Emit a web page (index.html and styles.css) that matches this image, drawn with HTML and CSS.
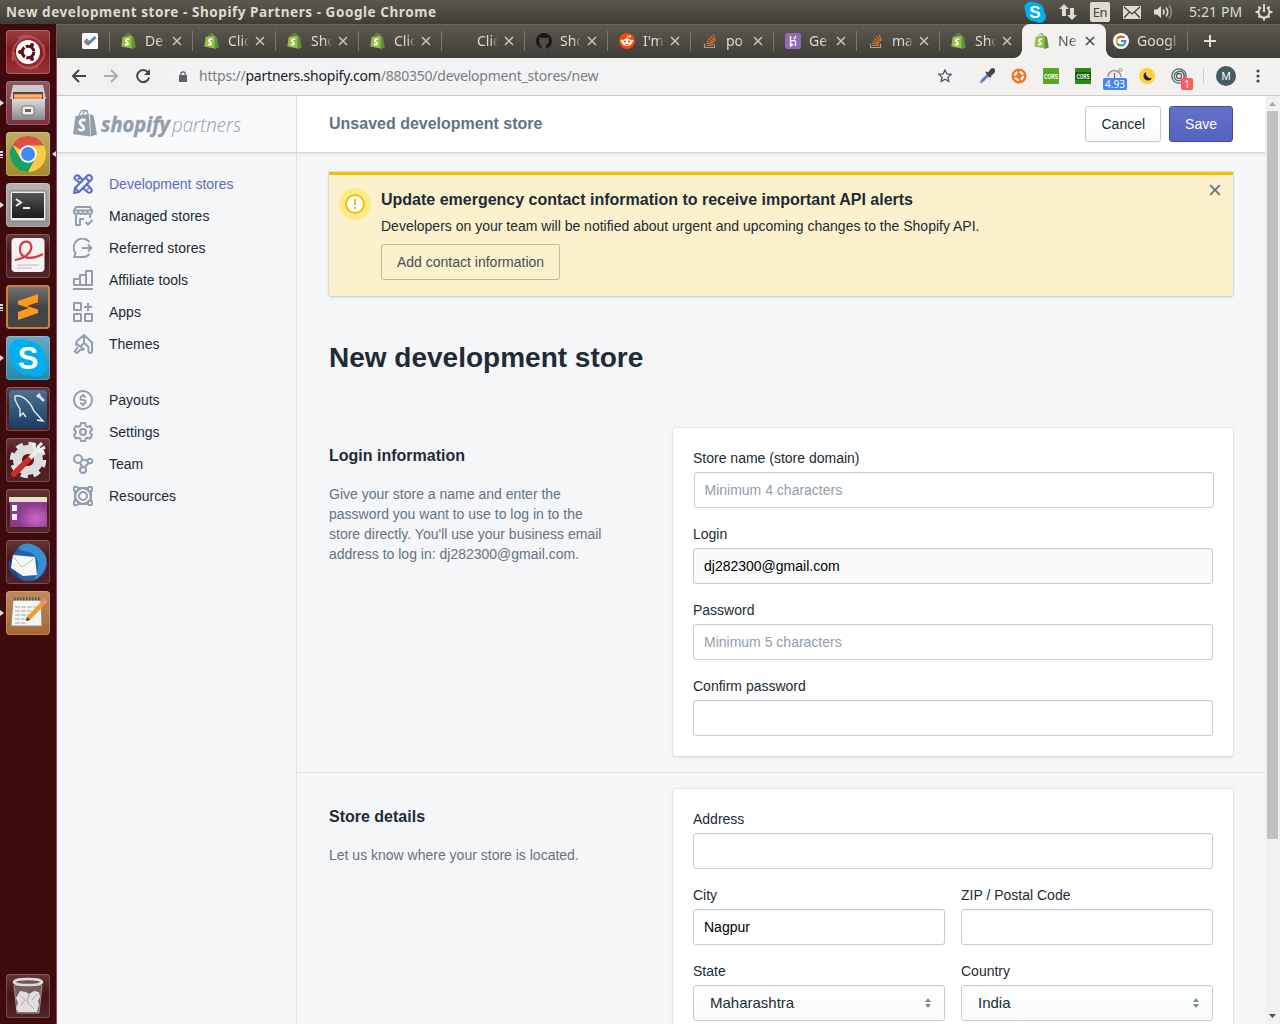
FILE: index.html
```html
<!DOCTYPE html>
<html lang="en">
<head>
<meta charset="utf-8">
<title>New development store - Shopify Partners</title>
<link rel="stylesheet" href="styles.css">
</head>
<body>
<svg class="defs" width="0" height="0" aria-hidden="true">
  <defs>
    <symbol id="bag" viewBox="0 0 16 16">
      <path d="M1.6 4 11 2.6l1 13.2L.4 13.6z" fill="#95bf47"/>
      <path d="M10.6 2.6 13 4.2l1.8 10.4-4.2 1.3z" fill="#5e8e3e"/>
      <path d="M4 4C4.6 1.6 6 .4 7.200.6 8.800.8 9 2.400 9 3.400M6.500 3.500C7 1.500 8.500.6 9.500 1.400" fill="none" stroke="#7dab3c" stroke-width=".9"/>
      <path d="M8.300 6.400C5.800 5.300 4.100 7 5.400 8.500c1 .9 2.200 1.500 1.600 2.700-.5.9-1.900.6-3-.2" fill="none" stroke="#fff" stroke-width="1.700"/>
    </symbol>
    <symbol id="stack" viewBox="0 0 16 16">
      <path d="M2.500 10.500v4h10v-4" fill="none" stroke="#9aa3a8" stroke-width="1.200"/>
      <path d="M4.200 12.500h6.800M4.200 10.400l6.800.9M4.700 8l6.500 2M5.900 5.400l5.800 3.700M8 3l4.500 5.200M11 1.500l2.400 6.200" stroke="#e8711c" stroke-width="1.100"/>
    </symbol>
    <symbol id="x" viewBox="0 0 10 10"><path d="M1 1l8 8M9 1l-8 8" stroke="currentColor" stroke-width="1.500"/></symbol>
    <symbol id="updown" viewBox="0 0 6 10"><path d="M0 4 3 0l3 4zM0 6h6l-3 4z" fill="#798c9c"/></symbol>
    <linearGradient id="steel" x2="0" y2="1"><stop stop-color="#ddd"/><stop offset="1" stop-color="#888"/></linearGradient>
    <linearGradient id="blk" x2="0" y2="1"><stop stop-color="#555"/><stop offset="1" stop-color="#1b1b1b"/></linearGradient>
    <linearGradient id="blue" x2="0" y2="1"><stop stop-color="#4d7192"/><stop offset="1" stop-color="#173e63"/></linearGradient>
    <radialGradient id="purp" cx=".7" cy=".7"><stop stop-color="#cf68c4"/><stop offset="1" stop-color="#8a3a90"/></radialGradient>
  </defs>
</svg>

<header class="panel">
  <span class="panel-title">New development store - Shopify Partners - Google Chrome</span>
  <div class="indicators">
    <svg width="22" height="22" viewBox="0 0 22 22"><circle cx="7" cy="7" r="6.500" fill="#00aff0"/><circle cx="15.500" cy="15.500" r="6.500" fill="#00aff0"/><circle cx="11" cy="11" r="9.500" fill="#00aff0"/><text x="11" y="17" class="skype-s" font-size="17">S</text></svg>
    <svg width="18" height="18" viewBox="0 0 18 18" fill="#dfdbd2"><path d="M5 1l5 5H7v7H3V6H0zM13 17l5-5h-3V5h-4v7H8z"/></svg>
    <span class="lang">En</span>
    <svg width="18" height="13" viewBox="0 0 18 13"><path d="M0 0h18v13H0z" fill="#dfdbd2"/><path d="M1 1l8 7 8-7M1 12l5.500-6M17 12l-5.500-6" stroke="#45433d" stroke-width="1.300" fill="none"/></svg>
    <svg width="20" height="16" viewBox="0 0 20 16" fill="none" stroke="#dfdbd2" stroke-width="1.600"><path d="M0 5.500h3L7 2v12l-4-3.500H0z" fill="#dfdbd2" stroke="none"/><path d="M9 5.500q2 2.500 0 5M12 3.500q3.500 4.500 0 9"/><path d="M15 1.500q5 6.500 0 13" stroke="#8d8a82"/></svg>
    <span class="clock">5:21 PM</span>
    <svg width="18" height="18" viewBox="0 0 18 18" fill="none" stroke="#dfdbd2"><path d="M6 4.500a5.500 5.500 0 1 0 6 0" stroke-width="2"/><path d="M9 1v8" stroke-width="2"/><path d="M3.500 3.500l2 2M14.500 3.500l-2 2M.5 9h3M17.500 9h-3M3.500 14.500l2-2M14.500 14.500l-2-2M9 17.500v-3" stroke-width="2"/></svg>
  </div>
</header>

<div class="desktop">
  <aside class="launcher">
    <div class="tile t-dash"><svg viewBox="0 0 44 44"><path d="M7 31C4 14 16 4 29 8M37 14c5 14-5 27-20 23M12 8C24 2 38 10 38 24M8 22c0 14 14 20 24 14" stroke="#c76c70" stroke-width="2" fill="none" opacity=".6"/><circle cx="22" cy="22" r="12" fill="#fff"/><circle cx="22" cy="22" r="5.800" fill="none" stroke="#5e1014" stroke-width="3" stroke-dasharray="10.600 1.550"/><circle cx="14" cy="22" r="2" fill="#5e1014"/><circle cx="26" cy="15" r="2" fill="#5e1014"/><circle cx="26" cy="29" r="2" fill="#5e1014"/></svg></div>
    <div class="tile t-files run"><svg viewBox="0 0 44 44"><path d="M7 4h30l3 14H4z" fill="#ccc"/><path d="M7 11h30v9H7z" fill="#514338"/><path d="M8 13h28v6H8z" fill="#ef944e"/><path d="M8 15h28" stroke="#ffd1a0"/><path d="M6 18h33v21H6z" fill="url(#steel)"/><rect x="16" y="25" width="12" height="9" rx="2" fill="#eee" stroke="#777"/><path d="M19 28h6v3h-6z" fill="#666"/></svg></div>
    <div class="tile t-chrome run multi focus"><svg viewBox="0 0 44 44"><circle cx="22" cy="22" r="18" fill="#fbcd43"/><path d="M22 22 6.400 13A18 18 0 0 1 37.600 13L38 13.500H22z" fill="#de5246"/><path d="M6.400 13A18 18 0 0 0 22 40l7.500-14L22 22l-7.500 4.500z" fill="#18a05f"/><circle cx="22" cy="22" r="8.700" fill="#fff"/><circle cx="22" cy="22" r="7" fill="#4587f3"/></svg></div>
    <div class="tile t-term run"><svg viewBox="0 0 44 44"><rect x="4" y="8" width="36" height="30" rx="1" fill="#eee" stroke="#777"/><path d="M6 10h32v25H6z" fill="url(#blk)"/><path d="M10 16l5 3.500-5 3.500M17 25h7" stroke="#eee" stroke-width="2" fill="none"/></svg></div>
    <div class="tile t-dark"><svg viewBox="0 0 44 44"><rect x="5.500" y="4" width="33" height="34" rx="4" fill="#f3f3f3"/><path d="M9 26c9-1 18-8 16-15-1-5-10-5-11 3-1 10 10 13 23 6" fill="none" stroke="#d43a40" stroke-width="2.200"/><path d="M11 31h22M11 34h15" stroke="#bbb"/></svg></div>
    <div class="tile t-subl run multi"><svg viewBox="0 0 44 44"><path d="M32 9v8l-11 4 11 3.500V28l-20 7v-8l11-4-11-3.500V16z" fill="#ff9820"/></svg></div>
    <div class="tile t-skype run"><svg viewBox="0 0 44 44"><circle cx="14" cy="14" r="11" fill="#00aff0"/><circle cx="30" cy="30" r="11" fill="#00aff0"/><circle cx="22" cy="22" r="17" fill="#00aff0"/><text x="22" y="33" class="skype-s" font-size="31">S</text></svg></div>
    <div class="tile t-dark"><svg viewBox="0 0 44 44"><rect x="3" y="3" width="38" height="38" rx="3" fill="url(#blue)"/><path d="M9 9c8-2 16 7 19 15l9 10-6-1M9 9c-1 5 3 9 5 13v7l3-3 3 4" fill="none" stroke="#e7edf2" stroke-width="1.400"/><path d="M32 8l6 6M31 10l3-3" stroke="#dde6ee" stroke-width="2.500"/></svg></div>
    <div class="tile t-dark"><svg viewBox="0 0 44 44"><circle cx="22" cy="22" r="16" fill="none" stroke="#e2e2e2" stroke-width="4.500" stroke-dasharray="7 5.570"/><circle cx="22" cy="22" r="10.500" fill="none" stroke="#dcdcdc" stroke-width="9"/><path d="M8 36 25 19" stroke="#c92c2a" stroke-width="6" stroke-linecap="round"/><path d="M24 20l7-7" stroke="#eee" stroke-width="4"/><path d="M29 5c-3 5 3 11 9 8M36 5l-4 4 2 3 5-3" stroke="#eee" stroke-width="3" fill="none"/></svg></div>
    <div class="tile t-dark"><svg viewBox="0 0 44 44"><path d="M4 9h37v29H4z" fill="url(#purp)"/><path d="M3 8h38v5H3z" fill="#e6e2c9"/><path d="M6 16h5v6H6zM6 25h5v6H6z" fill="#fff"/></svg></div>
    <div class="tile t-dark"><svg viewBox="0 0 44 44"><circle cx="23" cy="23" r="18" fill="#2462ac"/><path d="M12 8c6-8 20-5 27 7 4 7 0 20-11 25 6-11 6-20-1-26-5-4-10-1-15-6z" fill="#378fd0"/><path d="M3 20c-2 8 2 16 10 19L6 22z" fill="#19468c"/><path d="M7 15l22 2 2 18-14 1L5 28z" fill="#f7f7f7"/><path d="M7 16l9 11 13-9" fill="none" stroke="#bbb"/></svg></div>
    <div class="tile t-note run"><svg viewBox="0 0 44 44"><path d="M7 9h28l1 26H5z" fill="#f5f5f1" stroke="#888"/><path d="M8 8h27" stroke="#555" stroke-width="3" stroke-dasharray="1.500 1.500"/><path d="M9 16h22M9 20h20M9 24h16M9 28h13M9 32h12" stroke="#aaa" stroke-dasharray="5 1"/><path d="M22 28 38 11" stroke="#f39a35" stroke-width="4.500"/><path d="M37 12l3-3" stroke="#e88c91" stroke-width="5"/><path d="M20 30l1-4 3 3z" fill="#333"/></svg></div>
    <div class="tile t-dark trash"><svg viewBox="0 0 44 44"><path d="M8 11h28l-3 28H11z" fill="#795c5e" stroke="#aa9294"/><path d="M14 17l6 1 3 2 5-3 5 1 1 5-2 4 1 4-2 7H12l-2-4 2-5-2-5z" fill="#dfdfdf"/><path d="M14 21l5 5-4 5M23 20l-2 8 7 7M31 20l-5 6" stroke="#aaa" fill="none"/><ellipse cx="22" cy="8" rx="14" ry="3" fill="#6b5354" stroke="#ddd" stroke-width="2.500"/></svg></div>
  </aside>

  <div class="browser">
    <nav class="tabs">
      <div class="tab pinned"><svg class="fav" viewBox="0 0 16 16"><rect width="16" height="16" rx="1.500" fill="#fff"/><path d="M2.500 7.500 6 11.500" stroke="#e6644d" stroke-width="3"/><path d="M4 6l3 3" stroke="#62a55a" stroke-width="2"/><path d="M5.500 11.500 13.500 4" stroke="#5383cb" stroke-width="3"/></svg></div>
      <div class="tab"><svg class="fav"><use href="#bag"/></svg><span>De</span><svg class="close"><use href="#x"/></svg></div>
      <div class="tab"><svg class="fav"><use href="#bag"/></svg><span>Clic</span><svg class="close"><use href="#x"/></svg></div>
      <div class="tab"><svg class="fav"><use href="#bag"/></svg><span>Sho</span><svg class="close"><use href="#x"/></svg></div>
      <div class="tab"><svg class="fav"><use href="#bag"/></svg><span>Clic</span><svg class="close"><use href="#x"/></svg></div>
      <div class="tab"><svg class="fav"></svg><span>Clic</span><svg class="close"><use href="#x"/></svg></div>
      <div class="tab"><svg class="fav" viewBox="0 0 16 16"><circle cx="8" cy="8" r="8" fill="#191717"/><path d="M6 16v-4C3.500 11.500 3 9.500 3.300 7.500L3.500 4l2 1h5l2-1 .3 3.500C13 9.500 12.500 11.500 10 12v4" fill="#504e47"/><path d="M3 11.500q1 2.500 3 2" stroke="#504e47" fill="none"/></svg><span>Sho</span><svg class="close"><use href="#x"/></svg></div>
      <div class="tab"><svg class="fav" viewBox="0 0 16 16"><circle cx="8" cy="8" r="8" fill="#ff4500"/><ellipse cx="8" cy="9.300" rx="5" ry="3.700" fill="#fff"/><circle cx="2.900" cy="8" r="1.300" fill="#fff"/><circle cx="13.100" cy="8" r="1.300" fill="#fff"/><circle cx="11" cy="3.500" r="1.100" fill="#fff"/><path d="M8 6l.6-3 2.400.5" stroke="#fff" stroke-width=".8" fill="none"/><circle cx="6" cy="8.600" r="1.100" fill="#ff4500"/><circle cx="10" cy="8.600" r="1.100" fill="#ff4500"/><path d="M5.800 11q2.200 1.300 4.400 0" stroke="#ff4500" stroke-width=".8" fill="none"/></svg><span>I'm</span><svg class="close"><use href="#x"/></svg></div>
      <div class="tab"><svg class="fav"><use href="#stack"/></svg><span>po</span><svg class="close"><use href="#x"/></svg></div>
      <div class="tab"><svg class="fav" viewBox="0 0 16 16"><rect width="16" height="16" rx="2" fill="#9068b3"/><path d="M5.500 3v5.500Q10.500 6 10.500 9v4M5.500 10.500V13l2-1.300zM10.500 3q0 2-1.500 3" stroke="#fff" stroke-width="1.400" fill="none"/></svg><span>Ge</span><svg class="close"><use href="#x"/></svg></div>
      <div class="tab"><svg class="fav"><use href="#stack"/></svg><span>ma</span><svg class="close"><use href="#x"/></svg></div>
      <div class="tab no-sep"><svg class="fav"><use href="#bag"/></svg><span>Sho</span><svg class="close"><use href="#x"/></svg></div>
      <div class="tab active"><svg class="fav"><use href="#bag"/></svg><span>Ne</span><svg class="close"><use href="#x"/></svg></div>
      <div class="tab google"><svg class="fav" viewBox="0 0 16 16"><circle cx="8" cy="8" r="8" fill="#fff"/><g fill="none" stroke-width="2.200"><path d="M4.200 5.800A4.500 4.500 0 0 1 11.300 4.800" stroke="#ea4335"/><path d="M4.200 5.800a4.500 4.500 0 0 0 0 4.400" stroke="#fbbc05"/><path d="M4.200 10.200a4.500 4.500 0 0 0 7 1.100" stroke="#34a853"/><path d="M11.200 11.300A4.500 4.500 0 0 0 12.400 8H8" stroke="#4285f4"/></g></svg><span>Googl</span></div>
      <svg class="plus" viewBox="0 0 12 12"><path d="M6 0v12M0 6h12" stroke="#e2dfd7" stroke-width="2"/></svg>
    </nav>

    <div class="toolbar">
      <svg class="nav-ic" viewBox="0 0 14 14"><path d="M14 7H1.500M7 1 1 7l6 6" fill="none" stroke="#45454a" stroke-width="2"/></svg>
      <svg class="nav-ic" viewBox="0 0 14 14"><path d="M0 7h12.500M7 1l6 6-6 6" fill="none" stroke="#adacaa" stroke-width="2"/></svg>
      <svg class="nav-ic" viewBox="0 0 14 14"><path d="M11.800 3.200A6 6 0 1 0 13 8.500" fill="none" stroke="#45454a" stroke-width="2"/><path d="M14 0v6H8z" fill="#45454a"/></svg>
      <div class="omnibox">
        <svg width="8" height="11" viewBox="0 0 8 11"><path d="M0 4h8v7H0z" fill="#5f6368"/><path d="M1.800 4.500V3a2.200 2.200 0 0 1 4.400 0v1.500" fill="none" stroke="#5f6368" stroke-width="1.200"/></svg>
        <span class="url">https://<b>partners.shopify.com</b>/880350/development_stores/new</span>
        <svg class="star" viewBox="0 0 14 14"><path d="M7 1l1.800 4 4.300.4-3.300 2.800 1 4.300L7 10.200l-3.800 2.300 1-4.300L.9 5.400 5.200 5z" fill="none" stroke="#54585e" stroke-width="1.300"/></svg>
      </div>
      <div class="exts">
        <svg viewBox="0 0 16 16"><path d="M1 15l1-3 6-6 2 2-6 6z" fill="#507ee0" stroke="#aab"/><path d="M7 4l5 5M9 6l3-4q2-2 3 0 1 1-1 3l-4 3z" fill="#444" stroke="#444" stroke-width="1.800"/></svg>
        <svg viewBox="0 0 16 16"><circle cx="8" cy="8" r="7.500" fill="#f47521"/><circle cx="8" cy="8" r="4" fill="none" stroke="#fff" stroke-width="2.200" stroke-dasharray="4.300 2"/></svg>
        <svg viewBox="0 0 16 16"><rect width="16" height="16" rx="1" fill="#58a61f"/><text class="cors" x="1" y="11" textLength="14" lengthAdjust="spacingAndGlyphs">CORS</text></svg>
        <svg viewBox="0 0 16 16"><rect width="16" height="16" rx="1" fill="#2c8a10"/><path d="M0 4h16v8H0z" fill="#165f05"/><text class="cors" x="1.500" y="11" textLength="13" lengthAdjust="spacingAndGlyphs">CORS</text></svg>
        <span class="badged"><svg viewBox="0 0 16 16"><path d="M1 9a6.500 6.500 0 0 1 13 0" fill="#eee" stroke="#999" stroke-width="1.500"/><path d="M7.500 10V5" stroke="#c33"/><circle cx="13.500" cy="2" r="1.500" fill="none" stroke="#999"/></svg><i class="badge speed">4.93</i></span>
        <svg viewBox="0 0 16 16"><circle cx="8" cy="8" r="8" fill="#fcd535"/><path d="M7 4a4.500 4.500 0 1 0 6 6A5 5 0 0 1 7 4z" fill="#2c1a60"/></svg>
        <span class="badged"><svg viewBox="0 0 16 16"><g fill="none" stroke="#59616c" stroke-width="1.300"><circle cx="8" cy="8" r="7.200"/><circle cx="8" cy="8" r="2.500"/><path d="M4 11Q1.500 5 7.500 3.500T13 9M11.500 4Q16 9 10.500 12M3 9q2 5 7 3"/></g></svg><i class="badge red">1</i></span>
      </div>
      <span class="avatar">M</span>
      <svg class="dots" viewBox="0 0 4 14"><circle cx="2" cy="2" r="1.600"/><circle cx="2" cy="7" r="1.600"/><circle cx="2" cy="12" r="1.600"/></svg>
    </div>

    <div class="viewport">
      <aside class="sidebar">
        <div class="brand">
          <svg width="170" height="32" viewBox="0 0 170 32">
            <path d="M2.500 7 16 5l1.200 22.600L0 25z" fill="#919eab"/><path d="M17 4.800l3.500 2L24 25.600l-6.300 2z" fill="#919eab"/>
            <path d="M6 7C7 2 10 .6 12 1.200c2.500.8 3 3 3 4.800M9.500 6.500C10 2.500 13 .8 15 2" fill="none" stroke="#919eab" stroke-width="1.200"/>
            <path d="M12.500 11.500C8 9.500 5.500 13 8 15.500c1.800 1.700 3.500 2.400 2.700 4.500-.9 1.900-3.500 1.400-5.500 0" fill="none" stroke="#f9fafb" stroke-width="2.700"/>
            <text class="logo-bold" x="28" y="23" textLength="69" lengthAdjust="spacingAndGlyphs">shopify</text>
            <text class="logo-thin" x="99" y="23" textLength="69" lengthAdjust="spacingAndGlyphs">partners</text>
          </svg>
        </div>
        <ul class="menu">
          <li class="current"><svg viewBox="0 0 20 20"><path d="M1 19l1-5L14 2q2-2 4 0t0 4L6 18z"/><path d="M7 9 2.500 5.500q-2-2 0-3.500t3.500 0L10 6.500M13 9.500l5 5q1.500 2 0 3.500t-3.500 0L9.500 13.500M2 14l4 4M5 5.500l1.500-1.500M14.500 14.500l1 1M13 4l3 3"/></svg>Development stores</li>
          <li><svg viewBox="0 0 20 20"><path d="M3 1h14l2 3.500H1zM1 4.500v1.500q0 2 2.200 2T5.500 6q0 2 2.200 2T10 6q0 2 2.200 2T14.500 6q0 2 2.200 2T19 6V4.500M3 8.500V19h4v-6h4M12.500 16l2.500 2.500L19.500 14M17 8.500V12"/></svg>Managed stores</li>
          <li><svg viewBox="0 0 20 20"><path d="M16.500 4A8.700 8.700 0 1 0 2.500 15L1 19h9q4 0 6.500-3M9 10h9.500M15 6.500l3.500 3.500-3.500 3.500"/></svg>Referred stores</li>
          <li><svg viewBox="0 0 20 20"><path d="M0 19h20M1 15V9h6v6zM7 15V5h6v10zM13 15V1h6v14z"/></svg>Affiliate tools</li>
          <li><svg viewBox="0 0 20 20"><path d="M1 1h7v7H1zM1 12h7v7H1zM12 12h7v7h-7zM15 1v8M11 5h8"/></svg>Apps</li>
          <li><svg viewBox="0 0 20 20"><path d="M3.500 12V7.500L11 1l8 7.500V17q0 2-1.800 2t-1.800-2v-4L11 8.500V1M4 10l7 5.500-4 .5-3 3-2.500-1.500L5 13M7.500 12.500 11 9"/></svg>Themes</li>
          <li class="second"><svg viewBox="0 0 20 20"><circle cx="10" cy="10" r="9"/><path d="M12.500 7.500Q12 6 10 6T7.500 8t2.500 2 2.500 2-2.500 2-2.500-1.500M10 4v2M10 14v2"/></svg>Payouts</li>
          <li><svg viewBox="0 0 20 20"><path d="M8 1h4l.7 2.800 1.800 1 2.700-.8 2 3.500L17.200 9.500v1.500l2 2-2 3.500-2.700-.8-1.800 1L12 19H8l-.7-2.300-1.800-1-2.700.8-2-3.500 2-2V9.500l-2-2 2-3.500 2.700.8 1.800-1z"/><circle cx="10" cy="10" r="3"/></svg>Settings</li>
          <li><svg viewBox="0 0 20 20"><circle cx="5" cy="5" r="4"/><circle cx="17" cy="7" r="2.300"/><circle cx="10" cy="16" r="3"/><path d="M9 5.500l5.500 1M7 8.500 9 13M15.500 9l-4 4.500"/></svg>Team</li>
          <li><svg viewBox="0 0 20 20"><circle cx="10" cy="10" r="7.800"/><circle cx="10" cy="10" r="4"/><circle cx="3" cy="3" r="2.200"/><circle cx="17" cy="3" r="2.200"/><circle cx="3" cy="17" r="2.200"/><circle cx="17" cy="17" r="2.200"/><path d="M5 2h10M5 18h10M2 5v10M18 5v10"/></svg>Resources</li>
        </ul>
      </aside>

      <main class="main">
        <div class="savebar">
          <strong>Unsaved development store</strong>
          <button class="btn">Cancel</button>
          <button class="btn primary">Save</button>
        </div>
        <div class="content">
          <section class="banner">
            <svg class="alert" viewBox="0 0 32 32"><circle cx="16" cy="16" r="16" fill="#ffea8a"/><circle cx="16" cy="16" r="9" fill="#fff" stroke="#eec200" stroke-width="2"/><path d="M16 11v6M16 19v2" stroke="#eec200" stroke-width="2"/></svg>
            <div class="banner-body">
              <h2>Update emergency contact information to receive important API alerts</h2>
              <p>Developers on your team will be notified about urgent and upcoming changes to the Shopify API.</p>
              <button class="btn outline">Add contact information</button>
            </div>
            <svg class="dismiss"><use href="#x"/></svg>
          </section>

          <h1>New development store</h1>
        </div>

        <section class="group">
          <div class="about">
            <h2>Login information</h2>
            <p>Give your store a name and enter the password you want to use to log in to the store directly. You'll use your business email address to log in: dj282300@gmail.com.</p>
          </div>
          <div class="card">
            <label class="field shifted">Store name (store domain)<input placeholder="Minimum 4 characters"></label>
            <label class="field">Login<input class="locked" value="dj282300@gmail.com" readonly></label>
            <label class="field">Password<input placeholder="Minimum 5 characters"></label>
            <label class="field">Confirm password<input></label>
          </div>
        </section>

        <section class="group ruled">
          <div class="about">
            <h2>Store details</h2>
            <p>Let us know where your store is located.</p>
          </div>
          <div class="card">
            <label class="field">Address<input></label>
            <div class="pair">
              <label class="field">City<input value="Nagpur"></label>
              <label class="field">ZIP / Postal Code<input></label>
            </div>
            <div class="pair">
              <div class="field">State<div class="select">Maharashtra<svg><use href="#updown"/></svg></div></div>
              <div class="field">Country<div class="select">India<svg><use href="#updown"/></svg></div></div>
            </div>
          </div>
        </section>
      </main>

      <div class="scrollbar">
        <svg viewBox="0 0 7 4"><path d="M0 4 3.500 0 7 4z" fill="#a3a3a3"/></svg>
        <div class="thumb"></div>
        <svg viewBox="0 0 7 4"><path d="M0 0h7L3.500 4z" fill="#505050"/></svg>
      </div>
    </div>
  </div>
</div>
</body>
</html>
```
FILE: styles.css
```css
* { box-sizing: border-box; }
body {
  margin: 0;
  height: 1024px;
  overflow: hidden;
  display: flex;
  flex-direction: column;
  font: 14px/20px "Liberation Sans", Arial, sans-serif;
  color: #212b36;
}
svg { display: block; flex: none; }
.defs { position: absolute; }
.skype-s { font-family: "Liberation Sans", sans-serif; font-weight: 700; fill: #fff; text-anchor: middle; }

/* Desktop panel */
.panel {
  flex: none;
  height: 24px;
  display: flex;
  align-items: center;
  justify-content: space-between;
  padding: 0 7px 0 6px;
  background: linear-gradient(#5b584e, #3f3d38);
  color: #dfdbd2;
  font-family: "Noto Sans", sans-serif;
}
.panel-title { font-size: 13.5px; font-weight: 700; white-space: nowrap; letter-spacing: .56px; }
.indicators { display: flex; align-items: center; gap: 13px; height: 24px; }
.lang { width: 20px; height: 20px; border-radius: 2px; background: #dfdbd2; color: #45433d; font-size: 13px; line-height: 20px; text-align: center; letter-spacing: -.5px; }
.clock { font-size: 14px; letter-spacing: .1px; white-space: nowrap; width: 53px; margin-left: 2px; }

.desktop { flex: 1; display: flex; min-height: 0; }

/* Launcher */
.launcher {
  flex: none;
  width: 57px;
  display: flex;
  flex-direction: column;
  gap: 7px;
  padding: 6px 6px;
  background: #3f0a0c;
  border-right: 1px solid #8c4663;
}
.tile { position: relative; width: 44px; height: 44px; border-radius: 4px; box-shadow: inset 0 0 0 1px rgba(255,255,255,.2); }
.tile svg { width: 44px; height: 44px; }
.t-dash { background: linear-gradient(#9c4044, #86191e 45%, #9a3438); }
.t-files { background: linear-gradient(#8b5862, #7d2f43); }
.t-chrome { background: linear-gradient(#c0ac67, #a58b2c); }
.t-term { background: linear-gradient(#b5b2b2, #969393); }
.t-dark { background: linear-gradient(#64363a, #4a1518 45%, #53262a); }
.t-subl { background: linear-gradient(#777, #444 50%); box-shadow: inset 0 0 0 2px #c9813d; }
.t-skype { background: linear-gradient(#6ba9c3, #2a86a9); }
.t-note { background: linear-gradient(#c08a5d, #a8672f); }
.trash { margin-top: auto; }
.run::before { content: ""; position: absolute; left: -6px; top: 19px; border: 3px solid transparent; border-left: 4px solid #ddd; border-right: 0; }
.run.multi::before { border: 0; width: 3px; height: 7px; top: 19px; background: repeating-linear-gradient(#ddd 0 2px, transparent 2px 3px); }
.focus::after { content: ""; position: absolute; right: -6px; top: 19px; border: 3px solid transparent; border-right: 4px solid #ddd; border-left: 0; }

/* Browser chrome */
.browser { flex: 1; min-width: 0; display: flex; flex-direction: column; }
.tabs {
  flex: none;
  height: 34px;
  display: flex;
  align-items: center;
  background: linear-gradient(#5c594f, #3f3d38);
  box-shadow: inset 0 1px #69665c;
  color: #dfdbd2;
  font: 14px/20px "Noto Sans", sans-serif;
}
.tab { position: relative; flex: none; width: 83px; height: 34px; display: flex; align-items: center; padding-left: 11px; }
.tab::after { content: ""; position: absolute; right: 0; top: 7px; width: 1px; height: 20px; background: #7b7870; }
.tab.pinned { width: 53px; padding-left: 25px; }
.fav { width: 16px; height: 16px; }
.tab span { width: 27px; margin-left: 8px; white-space: nowrap; -webkit-mask-image: linear-gradient(90deg, #000 50%, transparent 78%); mask-image: linear-gradient(90deg, #000 50%, transparent 78%); }
.close { width: 10px; height: 10px; color: #c9c6bf; }
.tab.active { width: 84px; margin-left: -1px; padding-left: 12px; background: #f2f1f0; border-radius: 8px 8px 0 0; color: #52545a; }
.tab.active::before { content: ""; position: absolute; left: -8px; right: -8px; bottom: 0; height: 8px; background: radial-gradient(circle at 0 0, transparent 7.500px, #f2f1f0 8px) left / 8px 8px no-repeat, radial-gradient(circle at 100% 0, transparent 7.500px, #f2f1f0 8px) right / 8px 8px no-repeat; }
.tab.active .close { color: #45454a; }
.tab.active::after, .tab.no-sep::after { display: none; }
.tab.google { width: 82px; padding-left: 7px; }
.tab.google span { width: 44px; margin-left: 8px; -webkit-mask-image: linear-gradient(90deg, #000 70%, transparent); mask-image: linear-gradient(90deg, #000 70%, transparent); }
.plus { width: 12px; height: 12px; margin-left: 16px; }

.toolbar { flex: none; height: 38px; display: flex; align-items: center; padding: 0 20px 1px 15px; background: #f2f1f0; border-bottom: 1px solid #cfcdcb; }
.nav-ic { width: 14px; height: 14px; margin-right: 18px; }
.omnibox { width: 798px; height: 28px; margin-left: -3px; display: flex; align-items: center; padding: 0 11px 0 14px; background: #f1f3f4; border-radius: 14px; }
.url { margin-left: 12px; font: 14px/20px "Noto Sans", sans-serif; color: #7a7e83; white-space: nowrap; letter-spacing: -.22px; }
.url b { font-weight: 400; color: #202124; }
.star { width: 14px; height: 14px; margin-left: auto; }
.exts { display: flex; align-items: center; gap: 16px; margin-left: 16px; padding-right: 16px; border-right: 1px solid #cfcdcb; }
.exts svg { width: 16px; height: 16px; }
.cors { fill: #fff; font: 700 8px "Liberation Sans", sans-serif; }
.badged { position: relative; }
.badge { position: absolute; top: 10px; height: 12px; border-radius: 2px; color: #fff; font: 10px/12px "Noto Sans", sans-serif; text-align: center; }
.speed { left: -4px; width: 24px; background: #4285f4; }
.red { left: 10px; width: 12px; background: #ff5c5c; }
.avatar { width: 20px; height: 20px; margin-left: 12px; border-radius: 50%; background: #455a64; color: #fff; font-size: 11px; line-height: 20px; text-align: center; }
.dots { width: 4px; height: 14px; margin-left: auto; fill: #45454a; }

/* Page */
.viewport { flex: 1; min-height: 0; display: flex; background: #f4f6f8; }
.sidebar { flex: none; width: 240px; border-right: 1px solid #dfe3e8; }
.brand { height: 57px; padding: 13px 0 0 16px; background: #f9fafb; border-bottom: 1px solid #d6d8dd; box-shadow: 0 1px 3px rgba(63,63,68,.12); }
.logo-bold, .logo-thin { font-family: "Open Sans", sans-serif; font-style: italic; fill: #919eab; }
.logo-bold { font-size: 21px; font-weight: 700; stroke: #919eab; stroke-width: .4; }
.logo-thin { font-size: 21px; font-weight: 300; }
.menu { list-style: none; margin: 0; padding: 15px 16px; }
.menu li { height: 32px; display: flex; align-items: center; gap: 16px; }
.menu svg { width: 20px; height: 20px; fill: none; stroke: #919eab; stroke-width: 2; stroke-linejoin: round; }
.menu .current { color: #5c6ac4; }
.menu .current svg { stroke: #5c6ac4; }
.menu .second { margin-top: 24px; }

.main { flex: 1; min-width: 0; overflow: hidden; }
.savebar { height: 57px; display: flex; align-items: center; gap: 8px; padding: 0 32px 1px; background: #fff; border-bottom: 1px solid #d6d8dd; box-shadow: 0 1px 3px rgba(63,63,68,.12); }
.savebar strong { margin-right: auto; font-size: 16px; color: #637381; }
.btn { height: 36px; padding: 0 15px; border: 1px solid #c4cdd5; border-radius: 3px; background: linear-gradient(#fff, #f9fafb); box-shadow: 0 1px rgba(22,29,37,.05); font: 14px/16px "Liberation Sans", sans-serif; color: #212b36; }
.btn.primary { background: linear-gradient(#6371c7, #5563c1); border-color: #3f4eae; color: #fff; }
.btn.outline { background: none; box-shadow: none; border-color: #b9bba8; color: #454f5b; }

.content { padding: 19px 32px 0; }
.banner { height: 124px; display: flex; padding: 13px 12px 0 10px; border-top: 3px solid #eec200; border-radius: 0 0 3px 3px; background: #fcf1cd; box-shadow: 0 0 0 1px rgba(63,63,68,.08), 0 1px 3px rgba(63,63,68,.2); }
.alert { width: 32px; height: 32px; }
.banner-body { flex: 1; margin-left: 10px; }
.banner h2 { margin: 0; font-size: 16px; line-height: 24px; }
.banner p { margin: 4px 0 8px; }
.dismiss { width: 12px; height: 12px; color: #637381; margin-top: -4px; }
h1 { margin: 44px 0 52px; font-size: 28px; line-height: 36px; }

.group { display: grid; grid-template-columns: 344px 560px; padding: 0 32px 16px; }
.group.ruled { padding-top: 16px; border-top: 1px solid #dfe3e8; }
.about { padding-top: 16px; }
.about h2 { margin: 0 0 16px; font-size: 16px; line-height: 24px; }
.about p { margin: 0; width: 284px; color: #637381; }
.card { display: flex; flex-direction: column; gap: 16px; padding: 20px; background: #fff; border-radius: 3px; box-shadow: 0 0 0 1px rgba(63,63,68,.05), 0 1px 3px rgba(63,63,68,.15); }
.field { display: flex; flex-direction: column; gap: 4px; flex: 1; min-width: 0; }
.field input, .select { width: 100%; height: 36px; border: 1px solid #c4cdd5; border-radius: 3px; background: #fff; box-shadow: inset 0 1px rgba(99,115,129,.05); }
.field input { padding: 0 10px; font: 14px/20px "Liberation Sans", sans-serif; color: #000; outline: 0; }
.field input::placeholder { color: #919eab; }
.field.shifted input { margin-left: 1px; padding-left: 9.500px; }
.field .locked { background: #f9fafb; }
.pair { display: flex; gap: 16px; }
.select { display: flex; align-items: center; justify-content: space-between; padding: 0 13px 0 16px; font-size: 15px; background: linear-gradient(#fff, #f9fafb); }
.select svg { width: 6px; height: 10px; }

.scrollbar { flex: none; width: 15px; display: flex; flex-direction: column; align-items: center; padding: 6px 0; background: #f1f1f1; }
.scrollbar svg { width: 7px; height: 4px; }
.thumb { width: 11px; height: 728px; margin: 5px 0 auto; background: #c1c1c1; }
```
